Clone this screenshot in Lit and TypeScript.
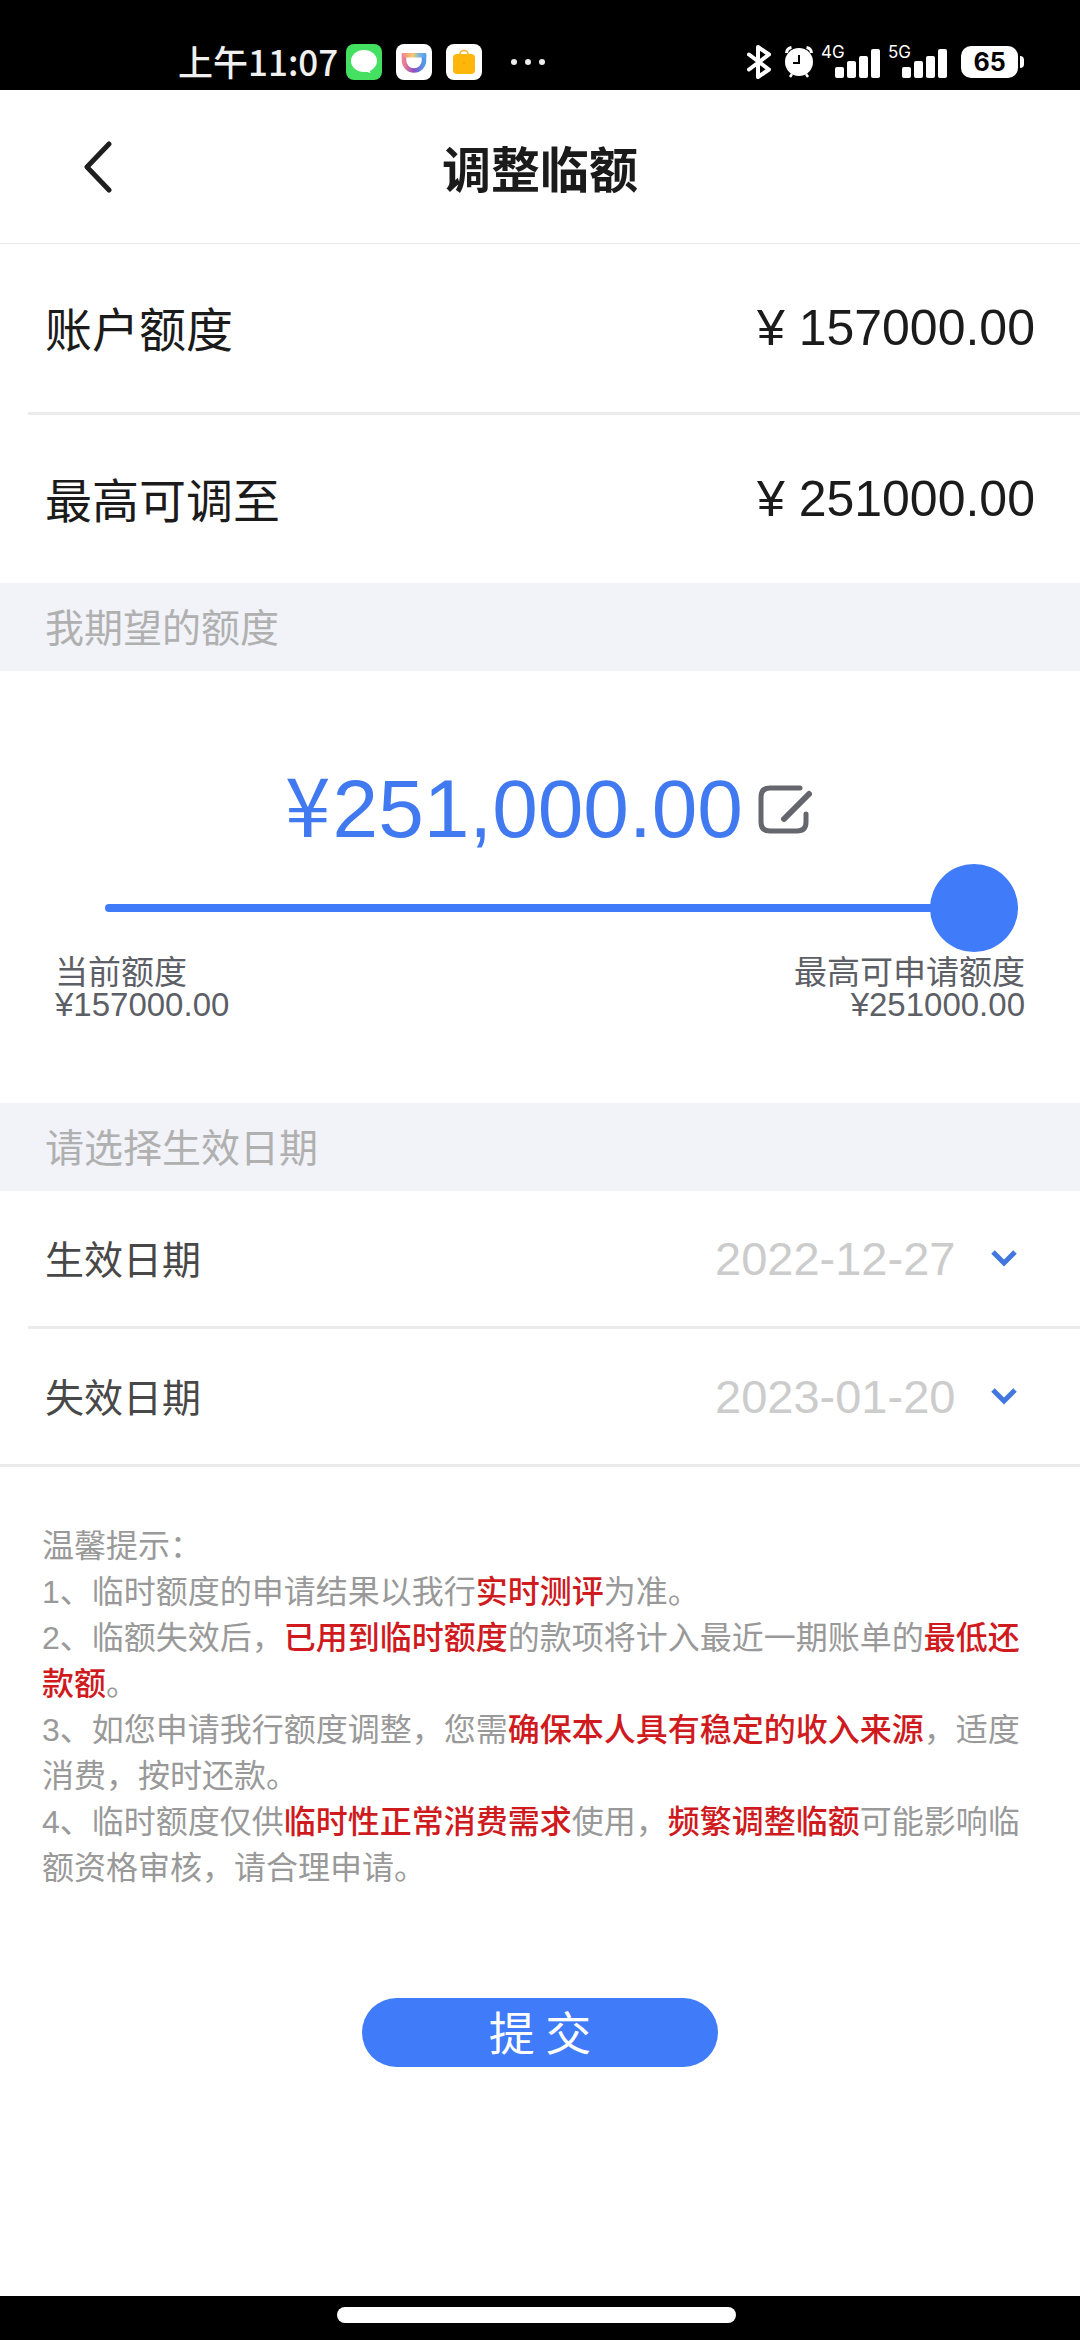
import { LitElement, html, css, svg } from "lit";
import { customElement, property, state } from "lit/decorators.js";

const CJK = css`"Noto Sans CJK SC", sans-serif`;
const LATIN = css`"Liberation Sans", "Noto Sans CJK SC", sans-serif`;

@customElement("signal-bars")
class SignalBars extends LitElement {
  static styles = css`
    :host { display: grid; width: 59px; height: 32px; }
    .net, .bars { grid-area: 1 / 1; }
    .net { font: 17px/12px "Inter", sans-serif; color: #fff; }
    .bars { width: 59px; height: 32px; fill: #fff; }
  `;
  @property() network = "";
  render() {
    return html`
      <span class="net">${this.network}</span>
      <svg class="bars" viewBox="0 0 59 32" aria-hidden="true">
        <rect x="14" y="21" width="9" height="11" rx="2" />
        <rect x="26" y="15" width="9" height="17" rx="2" />
        <rect x="38" y="10" width="9" height="22" rx="2" />
        <rect x="50" y="3" width="9" height="29" rx="2" />
      </svg>
    `;
  }
}

@customElement("status-bar")
class StatusBar extends LitElement {
  static styles = css`
    :host {
      display: flex; justify-content: space-between; align-items: center;
      box-sizing: border-box; height: 90px; padding: 34px 56px 0 178px;
      background: #000; color: #f0f0f0;
    }
    .group { display: flex; align-items: center; }
    .time { font: 500 35px/40px ${CJK}; margin-right: 8px; padding-bottom: 2px; }
    .app { width: 36px; height: 36px; margin-right: 14px; }
    .dots { width: 34px; height: 8px; margin-left: 15px; fill: #eee; }
    .bt { width: 24px; height: 34px; margin-right: 14px; }
    .alarm { width: 28px; height: 32px; margin-right: 8px; }
    .sig { margin-right: 8px; }
    .sig.last { margin-right: 14px; }
    .cell {
      width: 57px; height: 32px; border-radius: 10px; background: #fff; color: #000;
      font: 700 25px/32px "Inter", sans-serif; text-align: center;
    }
    .nub { width: 4px; height: 12px; margin-left: 2px; background: #fff; border-radius: 0 6px 6px 0; }
  `;
  render() {
    return html`
      <div class="group">
        <span class="time">上午11:07</span>
        <svg class="app" viewBox="0 0 36 36" aria-hidden="true">
          <rect width="36" height="36" rx="8" fill="#43e062" />
          <ellipse cx="18" cy="17" rx="13" ry="11" fill="#fff" />
          <path d="M18 27l6.500 2-1.500-5z" fill="#fff" />
        </svg>
        <svg class="app" viewBox="0 0 36 36" aria-hidden="true">
          <defs>
            <linearGradient id="arc" x1="0" y1="0" x2="1" y2="0">
              <stop offset="0" stop-color="#ef7f93" />
              <stop offset=".5" stop-color="#8a4fc4" />
              <stop offset="1" stop-color="#4f9bea" />
            </linearGradient>
            <linearGradient id="lid" x1="0" y1="0" x2="1" y2="0">
              <stop offset="0" stop-color="#ef7f93" />
              <stop offset=".45" stop-color="#f4cf68" />
              <stop offset=".7" stop-color="#7fb6e0" />
              <stop offset="1" stop-color="#4f9bea" />
            </linearGradient>
          </defs>
          <rect width="36" height="36" rx="8" fill="#fff" />
          <path d="M8 11v5.500a10 10 0 0 0 20 0V11" fill="none" stroke="url(#arc)" stroke-width="4.500" />
          <rect x="5.750" y="9" width="24.500" height="4.500" rx="1" fill="url(#lid)" />
        </svg>
        <svg class="app" viewBox="0 0 36 36" aria-hidden="true">
          <rect width="36" height="36" rx="8" fill="#fff" />
          <path d="M14 11V10a4 3.500 0 0 1 8 0v1" fill="none" stroke="#f6b21c" stroke-width="1.500" />
          <rect x="7" y="10" width="22" height="20" rx="4" fill="#ffb60a" />
          <circle cx="18" cy="19" r="1" fill="#f5a300" />
        </svg>
        <svg class="dots" viewBox="0 0 34 8" aria-hidden="true">
          <circle cx="3" cy="4" r="3" /><circle cx="17" cy="4" r="3" /><circle cx="31" cy="4" r="3" />
        </svg>
      </div>
      <div class="group">
        <svg class="bt" viewBox="0 0 24 34" fill="none" stroke="#fff" stroke-width="4" stroke-linejoin="round" stroke-linecap="round" aria-hidden="true">
          <path d="M2 9.500L22 24.500 11 32V2L22 9.500 2 24.500" />
        </svg>
        <svg class="alarm" viewBox="0 0 28 32" aria-hidden="true">
          <path d="M1.500 7a6 6 0 0 1 5-5.500M26.500 7a6 6 0 0 0-5-5.500" fill="none" stroke="#fff" stroke-width="3" />
          <path d="M7 28l-2 3M21 28l2 3" stroke="#fff" stroke-width="2.500" />
          <circle cx="14" cy="16" r="14" fill="#fff" />
          <path d="M14 9v8H8" fill="none" stroke="#000" stroke-width="2" />
        </svg>
        <signal-bars class="sig" network="4G"></signal-bars>
        <signal-bars class="sig last" network="5G"></signal-bars>
        <span class="cell">65</span>
        <span class="nub"></span>
      </div>
    `;
  }
}

interface Note { text: string; strong?: boolean }

const NOTES: Note[][] = [
  [{ text: "1、临时额度的申请结果以我行" }, { text: "实时测评", strong: true }, { text: "为准。" }],
  [
    { text: "2、临额失效后，" }, { text: "已用到临时额度", strong: true },
    { text: "的款项将计入最近一期账单的" }, { text: "最低还款额", strong: true }, { text: "。" },
  ],
  [
    { text: "3、如您申请我行额度调整，您需" }, { text: "确保本人具有稳定的收入来源", strong: true },
    { text: "，适度消费，按时还款。" },
  ],
  [
    { text: "4、临时额度仅供" }, { text: "临时性正常消费需求", strong: true }, { text: "使用，" },
    { text: "频繁调整临额", strong: true }, { text: "可能影响临额资格审核，请合理申请。" },
  ],
];

const chevronDown = svg`<path d="M2 2l11 11L24 2" fill="none" stroke="#4377e0" stroke-width="5" />`;

@customElement("app-root")
class AppRoot extends LitElement {
  static styles = css`
    :host {
      display: flex; flex-direction: column; min-height: 100vh;
      background: #fff; color: #1b1b1b; font-family: ${CJK};
    }
    button, select, input { font-family: inherit; margin: 0; padding: 0; border: 0; background: none; }
    button { cursor: pointer; }
    svg { display: block; }
    .header {
      display: grid; grid-template-columns: 1fr auto 1fr; align-items: center;
      height: 153px; border-bottom: 1px solid #e8e8e8;
    }
    .back { justify-self: start; padding: 24px 42px; margin-left: 40px; }
    .title { margin: 0; font: 700 49px/70px ${CJK}; }
    .row {
      display: flex; justify-content: space-between; align-items: center;
      height: 168px; padding: 0 45px;
    }
    .name { padding-bottom: 3px; font-size: 47px; line-height: 68px; }
    .value { font: 50px/68px ${LATIN}; }
    .rule { height: 3px; background: #ebebeb; }
    .rule.inset { margin-left: 28px; }
    .band {
      margin: 0; padding: 0 45px 3px; background: #f2f3f8; color: #b0b0b0;
      font-size: 39px; font-weight: 400; line-height: 85px;
    }
    .picker { padding: 90px 0 82px; }
    .wish { display: flex; justify-content: center; align-items: center; gap: 15px; padding-left: 17px; color: #417af0; }
    .sum { font: 82px/96px ${LATIN}; }
    .yen { margin-right: 2px; font-family: ${CJK}; line-height: 1; }
    .slide { padding: 7px 62px 0 105px; }
    .range { display: block; width: 100%; height: 88px; appearance: none; outline: none; }
    .range::-webkit-slider-runnable-track {
      height: 8px; border-radius: 4px;
      background: linear-gradient(to right, #407bfa var(--filled), #dcdfe6 var(--filled));
    }
    .range::-webkit-slider-thumb {
      appearance: none; width: 88px; height: 88px; margin-top: -40px;
      border-radius: 50%; background: #407bfa;
    }
    .ends {
      display: flex; justify-content: space-between; padding: 5px 55px 0;
      color: #5c6066; font: 33px/32px ${LATIN};
    }
    .end { display: flex; flex-direction: column; }
    .end.max { text-align: right; }
    .date { height: 135px; padding: 0 63px 0 45px; }
    .label { padding-bottom: 3px; font-size: 39px; line-height: 56px; color: #484848; }
    .choice { display: flex; align-items: center; gap: 35px; }
    .day { appearance: none; color: #ccc; font: 47px/60px ${LATIN}; opacity: 1; }
    .notes { padding: 56px 42px 0; font: 32px/46px ${LATIN}; color: #999; }
    .note { margin: 0; }
    .hot { color: #cf1a1e; font-weight: 500; }
    .submit {
      align-self: center; width: 356px; height: 69px; margin: 107px 0 69px; padding-bottom: 5px; border-radius: 35px;
      background: #407bfa; color: #fff; font: 46px/64px ${CJK};
    }
    .nav { display: flex; justify-content: center; margin-top: auto; padding: 11px 7px 17px 0; background: #000; }
    .pill { width: 399px; height: 16px; border-radius: 8px; background: #fff; }
  `;

  private readonly min = 157000;
  private readonly max = 251000;
  @state() private amount = 251000;

  private onSlide(e: Event) {
    this.amount = Number((e.target as HTMLInputElement).value);
  }

  private dateRow(id: string, label: string, value: string) {
    return html`
      <div class="row date">
        <label class="label" for=${id}>${label}</label>
        <div class="choice">
          <select class="day" id=${id}><option>${value}</option></select>
          <svg width="26" height="17" viewBox="0 0 26 17" aria-hidden="true">${chevronDown}</svg>
        </div>
      </div>
    `;
  }

  render() {
    const filled = ((this.amount - this.min) / (this.max - this.min)) * 100;
    const sum = this.amount.toLocaleString("en-US", { minimumFractionDigits: 2 });
    return html`
      <status-bar></status-bar>
      <header class="header">
        <button class="back" aria-label="返回">
          <svg width="32" height="52" viewBox="0 0 32 52" fill="none" stroke="#1f1f1f" stroke-width="5" stroke-linecap="round" stroke-linejoin="round">
            <path d="M27 3L5 26l22 23" />
          </svg>
        </button>
        <h1 class="title">调整临额</h1>
      </header>

      <div class="row"><span class="name">账户额度</span><span class="value">¥ 157000.00</span></div>
      <div class="rule inset"></div>
      <div class="row"><span class="name">最高可调至</span><span class="value">¥ 251000.00</span></div>

      <h2 class="band">我期望的额度</h2>
      <section class="picker">
        <div class="wish">
          <span class="sum"><span class="yen">¥</span>${sum}</span>
          <button aria-label="编辑额度">
            <svg width="54" height="50" viewBox="0 0 54 50" fill="none" stroke="#66666f" stroke-width="5" stroke-linecap="round">
              <path d="M42 4H12q-9 0-9 9v25q0 9 9 9h27q9 0 9-9V30" />
              <path d="M26 35L51 10" stroke-width="6" />
            </svg>
          </button>
        </div>
        <div class="slide">
          <input class="range" type="range" aria-label="我期望的额度" style="--filled:${filled}%"
            min=${this.min} max=${this.max} step="1000" .value=${String(this.amount)} @input=${this.onSlide} />
        </div>
        <div class="ends">
          <div class="end"><span>当前额度</span><span>¥157000.00</span></div>
          <div class="end max"><span>最高可申请额度</span><span>¥251000.00</span></div>
        </div>
      </section>

      <h2 class="band">请选择生效日期</h2>
      ${this.dateRow("start", "生效日期", "2022-12-27")}
      <div class="rule inset"></div>
      ${this.dateRow("end", "失效日期", "2023-01-20")}
      <div class="rule"></div>

      <section class="notes">
        <p class="note">温馨提示：</p>
        ${NOTES.map((line) => html`<p class="note">${line.map((n) => (n.strong ? html`<span class="hot">${n.text}</span>` : n.text))}</p>`)}
      </section>

      <button class="submit">提 交</button>
      <div class="nav"><span class="pill"></span></div>
    `;
  }
}
